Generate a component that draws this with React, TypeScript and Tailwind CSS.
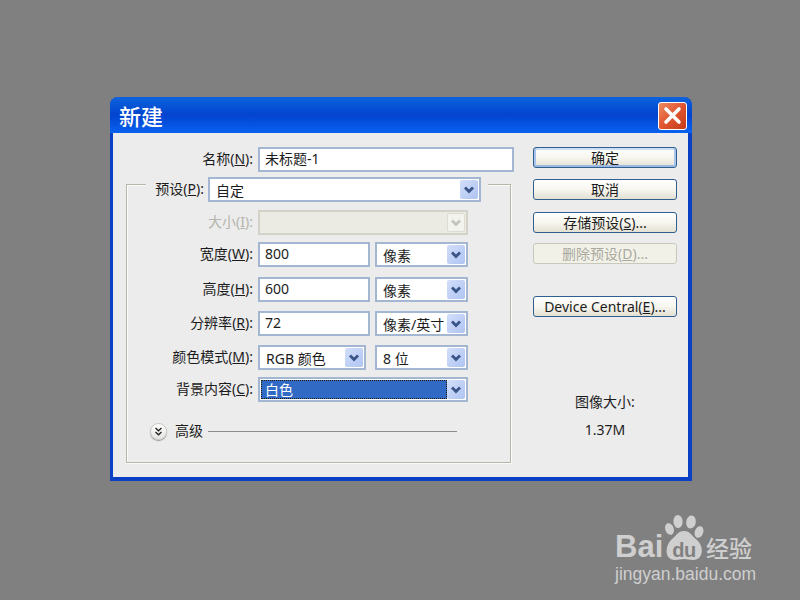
import React from 'react';

const FONT = "font-['Noto_Sans','Noto_Sans_CJK_SC',sans-serif]";

const Chevron = ({ color = '#3a5488' }: { color?: string }) => (
  <svg width="12" height="10" viewBox="0 0 12 10" fill="none">
    <path d="M2 2.5 L6 6.5 L10 2.5" stroke={color} strokeWidth="2.8" />
  </svg>
);

const Label = ({ text, hot, width, disabled }: { text: string; hot: string; width: string; disabled?: boolean }) => (
  <div className={`${width} shrink-0 pb-[2px] text-right whitespace-nowrap ${disabled ? 'text-[#b5b5ad]' : 'text-[#1c1c1c]'}`}>
    {text}(<u>{hot}</u>):
  </div>
);

const TextBox = ({ value, width }: { value: string; width: string }) => (
  <div className={`${width} h-full shrink-0 bg-white border-2 border-[#a3b7d2] pl-[5px] leading-[19px] text-[#1c1c1c]`}>
    {value}
  </div>
);

const Select = ({ value, width, selected }: { value: string; width: string; selected?: boolean }) => (
  <div className={`${width} h-full shrink-0 flex bg-white border-2 border-[#a3b7d2] p-px`}>
    <div
      className={`flex-1 min-w-0 whitespace-nowrap overflow-hidden ${
        selected
          ? 'flex items-center bg-[#316ac5] text-white border border-dotted border-[#2a1c00] pl-[3px]'
          : 'pl-[5px] leading-[21px] text-[#1c1c1c]'
      }`}
    >
      {value}
    </div>
    <div className="w-[18px] shrink-0 flex items-center justify-center rounded-[2px] bg-gradient-to-br from-[#d3defa] to-[#aec4f2]">
      <Chevron />
    </div>
  </div>
);

const Button = ({ children, def, disabled, className }: { children: React.ReactNode; def?: boolean; disabled?: boolean; className: string }) => (
  <div
    className={`${className} h-[21px] rounded-[3px] border flex items-center justify-center whitespace-nowrap ${
      disabled
        ? 'border-[#c9c8bc] bg-[#f2f1e8] text-[#a9a99f]'
        : 'border-[#2f5f8f] bg-gradient-to-b from-white via-[#f7f6ef] to-[#e3e0d3] text-[#1c1c1c]'
    } ${def ? 'shadow-[inset_2px_0_0_#a9c3ea,inset_-2px_0_0_#a9c3ea,inset_0_2px_0_#cfdef2,inset_0_-2px_0_#9bb8e3]' : ''}`}
  >
    {children}
  </div>
);

const Row = ({ className, children }: { className: string; children: React.ReactNode }) => (
  <div className={`${className} flex items-center h-[25px]`}>{children}</div>
);

const BaiduMark = () => (
  <div className="absolute left-[615px] top-[514px] w-[145px] h-[70px] text-[#cfcfcf]">
    <div className="flex items-start">
      <div className="mt-[17px] w-[50px] text-[31px] leading-[32px] font-bold font-['Liberation_Sans',sans-serif]">Bai</div>
      <div className="relative w-[39px] h-[47px]">
        <svg width="39" height="47" viewBox="0 0 39 47" fill="#cfcfcf">
          <ellipse cx="4.5" cy="15" rx="4.2" ry="6" transform="rotate(-20 4.5 15)" />
          <ellipse cx="13" cy="7.5" rx="4.6" ry="6.6" transform="rotate(-5 13 7.5)" />
          <ellipse cx="26" cy="8" rx="4.8" ry="6.6" transform="rotate(8 26 8)" />
          <ellipse cx="34" cy="18" rx="4.2" ry="6" transform="rotate(20 34 18)" />
          <path d="M19 17 C25 17 27 22 32 26 C39 32 39 46 28 46 C24 46 23 45 19 45 C15 45 14 46 10 46 C-1 46 0 32 6 26 C11 22 13 17 19 17 Z" />
        </svg>
        <div className="absolute left-[5px] top-[27px] w-[28px] text-center text-[20px] leading-[18px] font-bold tracking-[-0.5px] text-[#808080] font-['Liberation_Sans',sans-serif]">du</div>
      </div>
      <div className="mt-[20px] ml-[2px] text-[23px] leading-[26px] font-['Noto_Sans_CJK_SC',sans-serif] font-medium whitespace-nowrap">经验</div>
    </div>
    <div className="mt-[2px] text-[17.5px] leading-[18px] font-['Liberation_Sans',sans-serif] whitespace-nowrap">jingyan.baidu.com</div>
  </div>
);

export default function App() {
  return (
    <div className={`relative w-[800px] h-[600px] overflow-hidden bg-[#808080] pt-[97px] pl-[110px] text-[14px] ${FONT}`}>
      <div className="w-[582px] h-[384px] flex flex-col rounded-t-[8px] bg-[#0b3fc4]">
        {/* Title bar */}
        <div className="h-[36px] shrink-0 flex items-center justify-between pl-[9px] pr-[5px] rounded-t-[8px] bg-gradient-to-b from-[#0f63dc] via-[#0343cf] to-[#0a62f0]">
          <span className="text-white text-[22px] leading-[26px] font-medium font-['Noto_Sans_CJK_SC',sans-serif]">新建</span>
          <div className="mt-[1px] w-[29px] h-[28px] rounded-[3px] border border-white bg-gradient-to-br from-[#ee8a5f] via-[#df5530] to-[#c43a18] flex items-center justify-center">
            <svg width="19" height="19" viewBox="0 0 19 19" fill="none">
              <path d="M3 3 L16 16 M16 3 L3 16" stroke="white" strokeWidth="3.6" strokeLinecap="round" />
            </svg>
          </div>
        </div>

        {/* Body */}
        <div className="flex-1 ml-[3px] mr-[4px] mb-[4px] bg-[#ececec] flex pl-[13px] pt-[14px]">
          <div className="w-[388px] shrink-0">
            <Row className="">
              <Label text="名称" hot="N" width="w-[127px]" />
              <div className="w-[5px]" />
              <TextBox value="未标题-1" width="w-[256px]" />
            </Row>

            {/* Group box with the preset row as its legend */}
            <div className="mt-[12px] w-[385px] h-[279px] border border-[#b8b8aa] shadow-[inset_1px_1px_0_#fafafa,1px_1px_0_#fafafa]">
              <Row className="-mt-[8px] ml-[19px] w-[342px] bg-[#ececec]">
                <Label text="预设" hot="P" width="w-[58px]" />
                <div className="w-[4px]" />
                <Select value="自定" width="w-[273px]" />
              </Row>

              <Row className="mt-[8px]">
                <Label text="大小" hot="I" width="w-[126px]" disabled />
                <div className="w-[5px]" />
                <div className="w-[210px] h-full border-2 border-[#d3d2c8] bg-[#ebebe4] flex justify-end p-px">
                  <div className="w-[18px] flex items-center justify-center rounded-[2px] bg-[#f3f3ee] border border-[#dedbd0]">
                    <Chevron color="#c4c4ba" />
                  </div>
                </div>
              </Row>
              <Row className="mt-[7px]">
                <Label text="宽度" hot="W" width="w-[126px]" />
                <div className="w-[5px]" />
                <TextBox value="800" width="w-[112px]" />
                <div className="w-[5px]" />
                <Select value="像素" width="w-[93px]" />
              </Row>
              <Row className="mt-[10px]">
                <Label text="高度" hot="H" width="w-[126px]" />
                <div className="w-[5px]" />
                <TextBox value="600" width="w-[112px]" />
                <div className="w-[5px]" />
                <Select value="像素" width="w-[93px]" />
              </Row>
              <Row className="mt-[9px]">
                <Label text="分辨率" hot="R" width="w-[126px]" />
                <div className="w-[5px]" />
                <TextBox value="72" width="w-[112px]" />
                <div className="w-[5px]" />
                <Select value="像素/英寸" width="w-[93px]" />
              </Row>
              <Row className="mt-[9px]">
                <Label text="颜色模式" hot="M" width="w-[126px]" />
                <div className="w-[5px]" />
                <Select value="RGB 颜色" width="w-[108px]" />
                <div className="w-[9px]" />
                <Select value="8 位" width="w-[93px]" />
              </Row>
              <Row className="mt-[7px]">
                <Label text="背景内容" hot="C" width="w-[126px]" />
                <div className="w-[5px]" />
                <Select value="白色" width="w-[210px]" selected />
              </Row>

              {/* Advanced */}
              <div className="mt-[19px] ml-[23px] h-[20px] flex items-center">
                <div className="w-[17px] h-[17px] rounded-full bg-gradient-to-b from-white to-[#e4e4e0] border border-[#c8c8c4] shadow-[0_1px_1px_#999] flex items-center justify-center">
                  <svg width="9" height="9" viewBox="0 0 9 9" fill="none">
                    <path d="M1.5 1 L4.5 3.8 L7.5 1 M1.5 5 L4.5 7.8 L7.5 5" stroke="#222" strokeWidth="1.3" />
                  </svg>
                </div>
                <span className="ml-[8px] pb-px text-[#1c1c1c]">高级</span>
                <div className="ml-[5px] w-[249px] h-[1px] bg-[#8c8c8c]" />
              </div>
            </div>
          </div>

          {/* Right column */}
          <div className="ml-[19px] w-[144px] flex flex-col">
            <Button className="" def>确定</Button>
            <Button className="mt-[11px]">取消</Button>
            <Button className="mt-[12px]">存储预设(<u>S</u>)...</Button>
            <Button className="mt-[10px]" disabled>删除预设(<u>D</u>)...</Button>
            <Button className="mt-[32px]">Device Central(<u>E</u>)...</Button>
            <div className="mt-[75px] h-[20px] leading-[20px] text-center text-[#1c1c1c]">图像大小:</div>
            <div className="mt-[8px] h-[20px] leading-[20px] text-center text-[#1c1c1c]">1.37M</div>
          </div>
        </div>
      </div>

      <BaiduMark />
    </div>
  );
}
